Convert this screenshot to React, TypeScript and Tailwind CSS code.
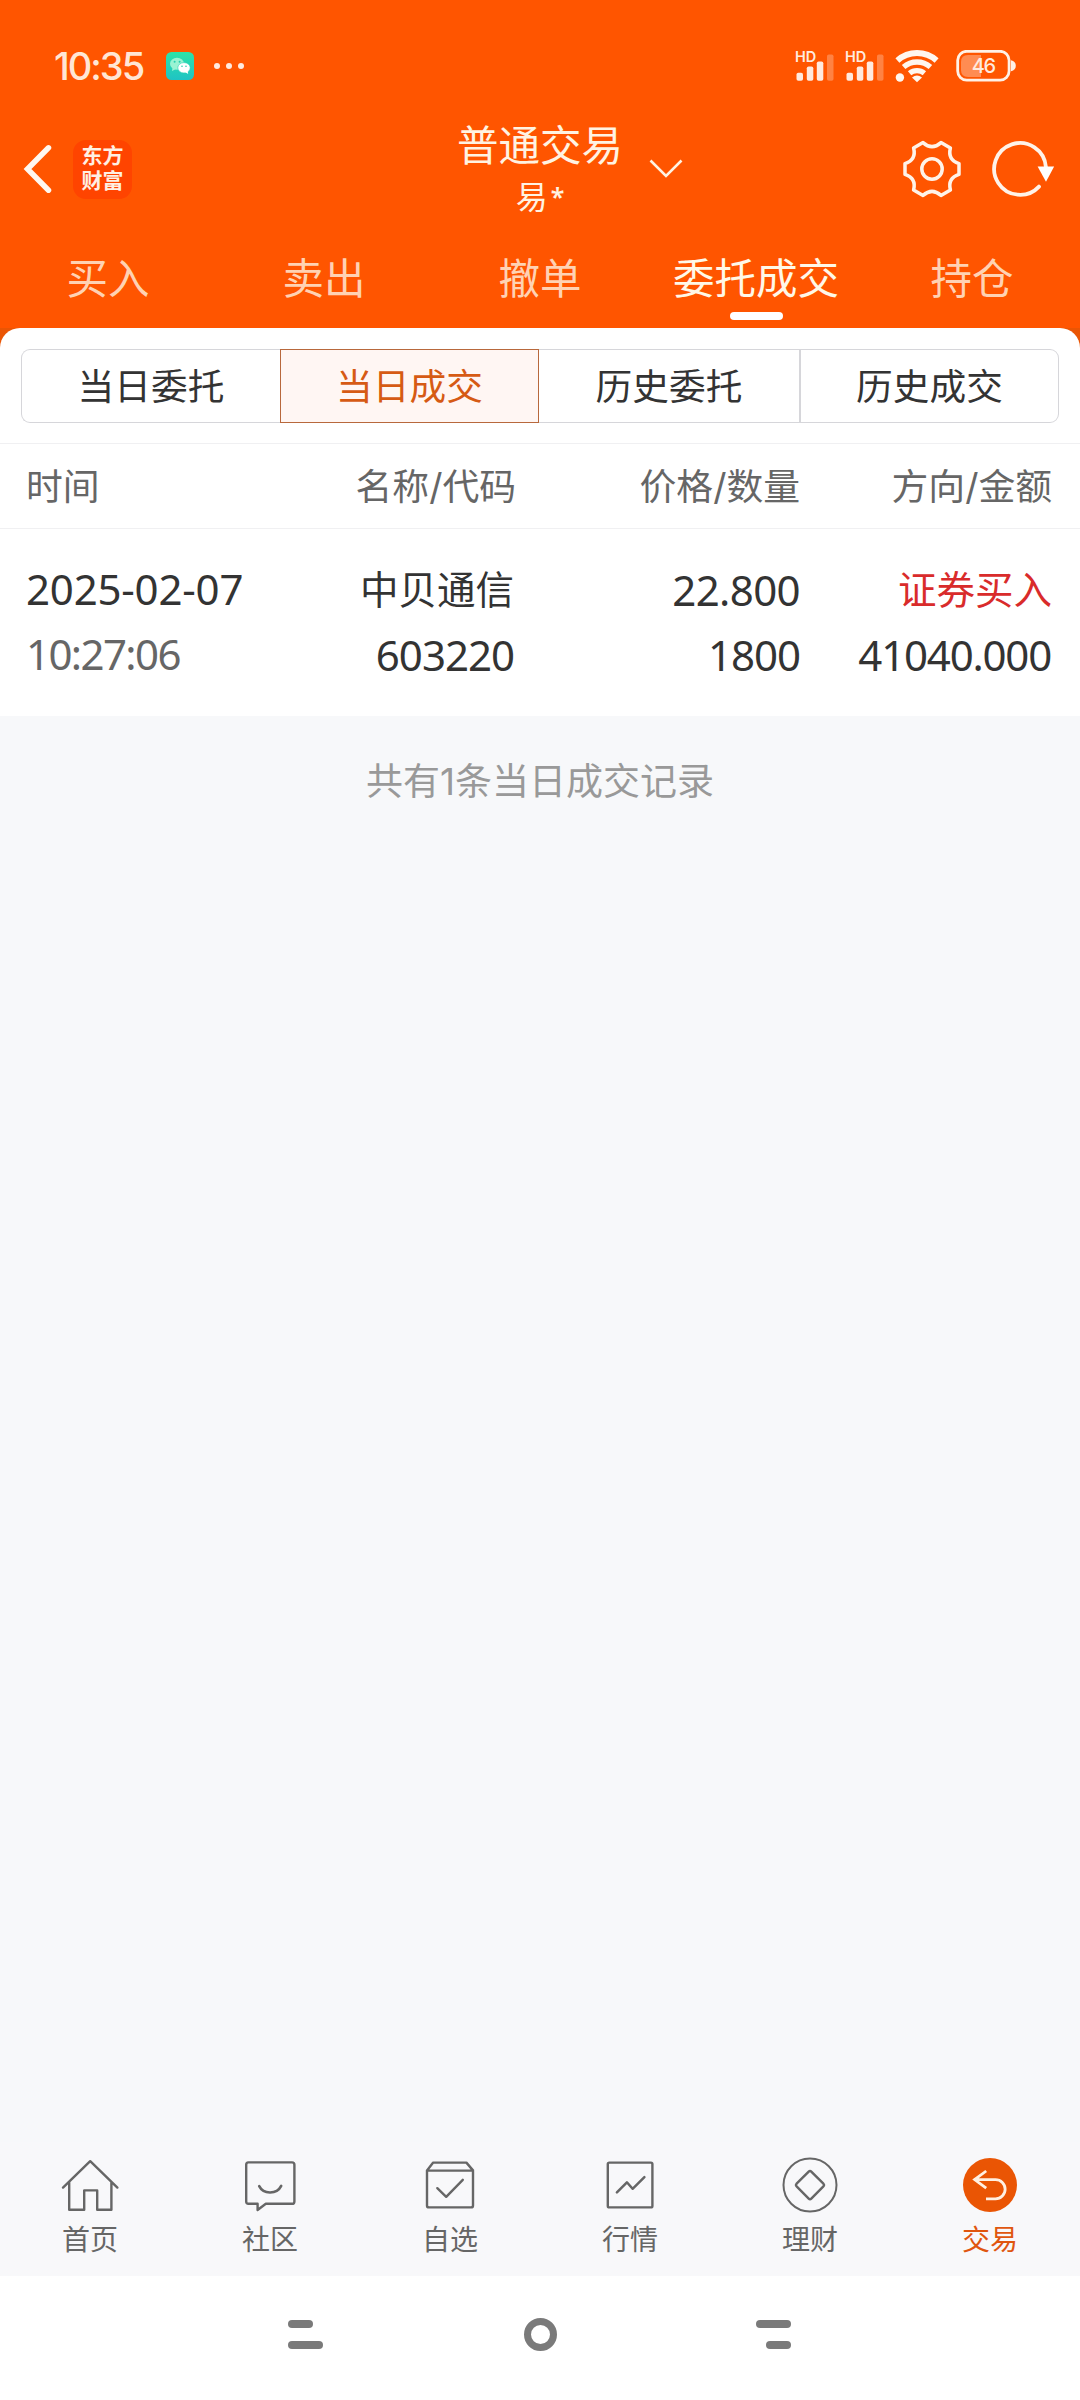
import React from "react";

const SignalBars = () => (
  <div className="relative h-8 w-[38px]">
    <span className="absolute top-[-1px] left-[-1px] text-[14.5px] leading-[16px] font-semibold text-[#ffeadf]">HD</span>
    <svg width="38" height="32" viewBox="0 0 38 32" fill="#ffeadf">
      <rect x="0.5" y="22.8" width="6.5" height="8" rx="1.8" />
      <rect x="10.8" y="16.5" width="6.5" height="14.3" rx="1.8" />
      <rect x="20.8" y="11.5" width="6.5" height="19.3" rx="1.8" />
      <rect x="31" y="4.5" width="6.5" height="26.3" rx="1.8" opacity="0.3" />
    </svg>
  </div>
);

const Wifi = () => (
  <svg width="44" height="34" viewBox="0 0 44 34" fill="none" stroke="#fff6ee">
    <path d="M2.4 11.4a29.5 29.5 0 0 1 39.2 0" strokeWidth="6" />
    <path d="M8.6 18a20.4 20.4 0 0 1 26.8 0" strokeWidth="5.4" />
    <path d="M14.6 24.2a11.6 11.6 0 0 1 14.8 0" strokeWidth="5.2" />
    <path d="M17 28.4q5-3.6 10 0L22 33.2Z" fill="#fff6ee" stroke="none" />
    <circle cx="4.9" cy="28.5" r="4.2" fill="#fff6ee" stroke="none" />
  </svg>
);

const Battery = () => (
  <svg width="61" height="32" viewBox="0 0 61 32">
    <path d="M12 5H25V27H12Q5 27 5 20V12Q5 5 12 5Z" fill="#ff8c52" />
    <rect x="1.7" y="1.3" width="51.4" height="28.8" rx="9" fill="none" stroke="#fff1e6" strokeWidth="2.8" />
    <path d="M55 10.2q4.8 1.4 4.8 5.5t-4.8 5.5Z" fill="#fff1e6" />
    <text x="27.2" y="22.8" textAnchor="middle" fontSize="20" fontWeight="500" letterSpacing="-1.4" fill="#ffeadf" fontFamily="Inter, sans-serif">46</text>
  </svg>
);

const WeChat = () => (
  <svg width="28" height="28" viewBox="0 0 28 28">
    <defs>
      <linearGradient id="wc" x1="0" y1="0" x2="0" y2="1">
        <stop offset="0" stopColor="#2de3a8" />
        <stop offset="1" stopColor="#1fc3c4" />
      </linearGradient>
    </defs>
    <rect width="28" height="28" rx="5.5" fill="url(#wc)" />
    <ellipse cx="11" cy="11.8" rx="7" ry="6" fill="#9af3d3" />
    <path d="M6.5 15.5 6 19l4-2Z" fill="#9af3d3" />
    <circle cx="8.6" cy="9.8" r="1" fill="#28cfae" />
    <circle cx="13.6" cy="9.8" r="1" fill="#28cfae" />
    <ellipse cx="18" cy="15.8" rx="6.2" ry="5.2" fill="#fff" stroke="#25d0b4" strokeWidth="0.6" />
    <path d="m19 20 3.2 2-.6-3.2Z" fill="#fff" />
    <circle cx="16" cy="14.2" r="0.8" fill="#28cfae" />
    <circle cx="20" cy="14.2" r="0.8" fill="#28cfae" />
  </svg>
);

const Gear = () => (
  <svg width="60" height="60" viewBox="-30 -30 60 60" fill="none" stroke="#fff3e8" strokeWidth="3.5" strokeLinejoin="round">
    <circle r="10.2" />
    <path d="M-9 -26.4Q0 -18.2 9 -26.4L18.4 -21Q15.4 -9.3 27 -5.4V5.4Q15.4 9.3 18.4 21L9 26.4Q0 18.2 -9 26.4L-18.4 21Q-15.4 9.3 -27 5.4V-5.4Q-15.4 -9.3 -18.4 -21Z" />
  </svg>
);

const Refresh = () => (
  <svg width="64" height="60" viewBox="-30 -30 64 60" fill="none" stroke="#fff3e8" strokeWidth="3.8" strokeLinecap="round">
    <path d="M19 17.6A25.9 25.9 0 1 1 25.9 -2" />
    <path d="M17.6 -2.6H34.2L26 12.8Z" fill="#fff" stroke="none" />
  </svg>
);

const tabs = ["买入", "卖出", "撤单", "委托成交", "持仓"];
const segments = ["当日委托", "当日成交", "历史委托", "历史成交"];

const iconProps = {
  width: 60,
  height: 60,
  viewBox: "0 0 60 60",
  fill: "none",
  stroke: "#666",
  strokeWidth: 2.4,
  strokeLinejoin: "round" as const,
  strokeLinecap: "round" as const,
};

const navItems = [
  {
    label: "首页",
    icon: (
      <svg {...iconProps}>
        <path d="M3 32.6 30.2 6.2 57.4 32.6M9.2 27.5V54.8H24.2V35.4H37.2V54.8H51.4V27.5" />
      </svg>
    ),
  },
  {
    label: "社区",
    icon: (
      <svg {...iconProps}>
        <path d="M8.4 7.4H52Q54.4 7.4 54.4 9.8V46.4Q54.4 48.8 52 48.8H25.8L17.6 55V48.8H8.4Q6.2 48.8 6.2 46.4V9.8Q6.2 7.4 8.4 7.4Z" />
        <path d="M19.2 31.2C23.4 39.6 36.8 39.6 41.2 30.8" strokeWidth="2.6" />
      </svg>
    ),
  },
  {
    label: "自选",
    icon: (
      <svg {...iconProps}>
        <path d="M7 15.4 13.2 7.6H46.4L53 15.4V50.4Q53 52.4 51 52.4H9Q7 52.4 7 50.4ZM7 15.6H53M17.3 33.2 26.2 41.8 42.8 24.8" />
      </svg>
    ),
  },
  {
    label: "行情",
    icon: (
      <svg {...iconProps}>
        <rect x="7.8" y="7.6" width="44.6" height="44.8" rx="1.5" />
        <path d="M16.9 37.4 26.9 27.3 32.6 33.8 44.4 22.2" strokeWidth="2.5" />
      </svg>
    ),
  },
  {
    label: "理财",
    icon: (
      <svg {...iconProps}>
        <circle cx="30" cy="30" r="26.5" strokeWidth="2" />
        <path d="M28.7 16.6Q30 15.3 31.3 16.6L43.4 28.7Q44.6 30 43.4 31.3L31.3 43.6Q30 44.9 28.7 43.6L16.6 31.3Q15.4 30 16.6 28.7Z" />
      </svg>
    ),
  },
  {
    label: "交易",
    active: true,
    icon: (
      <svg {...iconProps} stroke="#fff0e2" strokeWidth={2.8} strokeLinejoin="miter" strokeLinecap="butt">
        <circle cx="30" cy="30" r="27" fill="#ea5504" stroke="none" />
        <path d="M26.2 16 14.6 24.6 26.2 33.2M14.6 24.6H35.5A9.6 9.6 0 0 1 35.5 43.9H26" />
      </svg>
    ),
  },
];

export default function App() {
  return (
    <div className="flex h-[2400px] w-[1080px] flex-col overflow-hidden bg-[#f7f8fa] font-[Inter,'Noto_Sans_CJK_SC',sans-serif] text-[#333]">
      <header className="flex h-[328px] shrink-0 flex-col bg-[#ff5500]">
        <div className="flex h-[132px] items-center justify-between pr-[63px] pl-[54px]">
          <div className="flex items-center">
            <span className="w-[112px] text-[38px] leading-[40px] font-medium tracking-[-2px] text-[#ffe6d5]">10:35</span>
            <WeChat />
            <div className="ml-5 flex gap-[6px]">
              <i className="size-[6px] rounded-full bg-[#ffeadf]" />
              <i className="size-[6px] rounded-full bg-[#ffeadf]" />
              <i className="size-[6px] rounded-full bg-[#ffeadf]" />
            </div>
          </div>
          <div className="flex items-center">
            <SignalBars />
            <div className="ml-3"><SignalBars /></div>
            <div className="ml-[11px]"><Wifi /></div>
            <div className="ml-[17px]"><Battery /></div>
          </div>
        </div>

        <div className="grid h-[100px] grid-cols-3">
          <div className="flex h-[74px] items-center pl-[22px]">
            <svg width="32" height="52" viewBox="0 0 32 52" fill="none" stroke="#fff8f0" strokeWidth="5.5" strokeLinecap="round" strokeLinejoin="miter">
              <path d="M26.5 4.8 5.5 26 26.5 47.2" />
            </svg>
            <div className="ml-[19px] flex size-[59px] flex-col items-center justify-center rounded-[13px] bg-[#ff4400] pb-[2px] text-[21px] leading-[25px] font-bold text-[#fff0e4]">
              <span>东方</span>
              <span>财富</span>
            </div>
          </div>
          <div className="relative flex flex-col items-center text-[#fff3e2]">
            <span className="-mt-[10px] h-[48px] text-[41.5px] leading-[48px]">普通交易</span>
            <span className="mt-[8px] flex text-[32px] leading-[40px]">
              易<b className="-mt-[2px] pl-[3px] font-['Noto_Sans',sans-serif] text-[25px] font-semibold">*</b>
            </span>
            <svg className="absolute top-[26px] left-[289px]" width="34" height="22" viewBox="0 0 34 22" fill="none" stroke="#fff3e2" strokeWidth="2.6">
              <path d="M1.5 2.5 17 18 32.5 2.5" />
            </svg>
          </div>
          <div className="flex h-[74px] items-center justify-end pr-[26px]">
            <Gear />
            <div className="ml-[28px]"><Refresh /></div>
          </div>
        </div>

        <nav className="grid h-[96px] grid-cols-5">
          {tabs.map((t) => {
            const active = t === "委托成交";
            return (
              <div key={t} className={active ? "flex flex-col items-center text-[#fff8e8]" : "flex flex-col items-center text-[#ffd2b3]"}>
                <span className="mt-[17px] h-[60px] text-[41.5px] leading-[60px]">{t}</span>
                {active && <i className="mt-[3px] h-2 w-[53px] rounded-full bg-white" />}
              </div>
            );
          })}
        </nav>
      </header>

      <main className="shrink-0 bg-[#ea5504]">
        <div className="rounded-t-[20px] bg-white pt-[21px]">
          <div className="mx-[21px] grid h-[74px] grid-cols-[259px_259px_260px_260px]">
            {segments.map((s, i) => (
              <div
                key={s}
                className={
                  i === 1
                    ? "flex items-center justify-center border border-[#b8683c] bg-[#fff6f3] text-[#d65a14]"
                    : i === 0
                      ? "flex items-center justify-center rounded-l-[9px] border border-r-0 border-[#d6d6da]"
                      : i === 2
                        ? "flex items-center justify-center border-y border-[#d6d6da]"
                        : "flex items-center justify-center rounded-r-[9px] border border-l-2 border-[#d6d6da]"
                }
              >
                <span className="pt-[2px] text-[36.7px] leading-[48px]">{s}</span>
              </div>
            ))}
          </div>

          <div className="mt-5 flex h-[86px] items-center border-y border-[#f0f0f2] pt-[2px] pl-[26px] text-[36.8px] text-[#666]">
            <span className="w-[231px]">时间</span>
            <span className="w-[259px] text-right">名称/代码</span>
            <span className="w-[284px] text-right">价格/数量</span>
            <span className="w-[252px] text-right">方向/金额</span>
          </div>

          <div className="flex h-[187px] px-[26px] pt-[29px] text-[38.5px] leading-[65px]">
            <div className="-mt-[2px] flex w-[231px] flex-col font-['Noto_Sans',sans-serif] text-[42px]">
              <span className="tracking-[-0.2px]">2025-02-07</span>
              <span className="tracking-[-1.6px] text-[#666]">10:27:06</span>
            </div>
            <div className="flex w-[257px] flex-col items-end">
              <span>中贝通信</span>
              <span className="-mt-px font-['Noto_Sans',sans-serif] text-[42px] tracking-[-1px]">603220</span>
            </div>
            <div className="-mt-px flex w-[286px] flex-col items-end font-['Noto_Sans',sans-serif] text-[42px]">
              <span className="tracking-[-0.6px]">22.800</span>
              <span className="tracking-[-1px]">1800</span>
            </div>
            <div className="flex w-[252px] flex-col items-end">
              <span className="text-[#d92b2b]">证券买入</span>
              <span className="-mt-px mr-px font-['Noto_Sans',sans-serif] text-[42px] tracking-[-1.2px]">41040.000</span>
            </div>
          </div>
        </div>
      </main>

      <p className="mt-[41px] text-center text-[37px] leading-[50px] text-[#999]">共有1条当日成交记录</p>

      <footer className="mt-auto shrink-0">
        <nav className="grid h-[134px] grid-cols-6 bg-[#f8f8fa] pt-[13px]">
          {navItems.map((n) => (
            <div key={n.label} className={n.active ? "flex flex-col items-center text-[#e0560f]" : "flex flex-col items-center text-[#666]"}>
              {n.icon}
              <span className="mt-[7px] text-[28px] leading-[36px]">{n.label}</span>
            </div>
          ))}
        </nav>
        <div className="flex h-[124px] items-center justify-between bg-white pr-[289px] pl-[288px] pb-[7px]">
          <div className="flex w-[35px] flex-col gap-[13px]">
            <i className="h-2 w-[25px] rounded-full bg-[#7a7a7a]" />
            <i className="h-2 w-[35px] rounded-full bg-[#7a7a7a]" />
          </div>
          <i className="relative left-px size-[33px] rounded-full border-[7px] border-[#7a7a7a]" />
          <div className="flex w-[35px] flex-col items-end gap-[13px]">
            <i className="h-2 w-[35px] rounded-full bg-[#7a7a7a]" />
            <i className="h-2 w-[25px] rounded-full bg-[#7a7a7a]" />
          </div>
        </div>
      </footer>
    </div>
  );
}
